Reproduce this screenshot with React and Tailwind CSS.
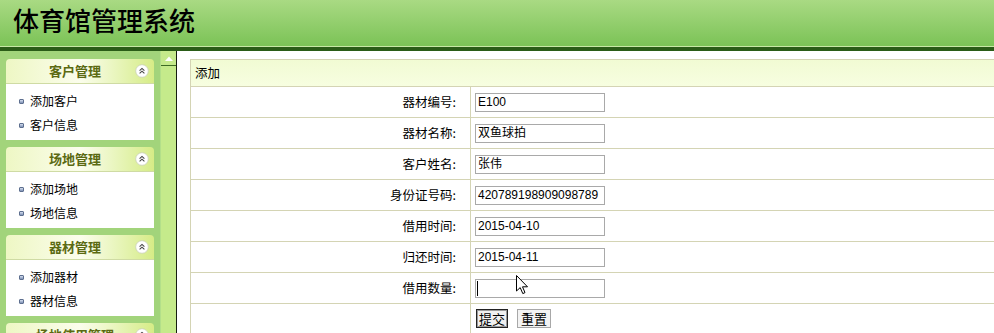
import React from "react";

const cjk = { fontFamily: '"Noto Sans CJK SC", "Noto Sans", sans-serif' };
const latin = { fontFamily: '"Liberation Sans", "Noto Sans CJK SC", sans-serif' };

function CollapseIcon() {
  return (
    <svg width="14" height="14" viewBox="0 0 14 14" className="absolute right-[5px] top-[5px]">
      <circle cx="7" cy="7" r="6.3" fill="#ffffff" stroke="#c9cfb8" strokeWidth="0.8" />
      <path d="M4.6 6.6 L7 4.4 L9.4 6.6" fill="none" stroke="#444" strokeWidth="1.1" />
      <path d="M4.6 9.4 L7 7.2 L9.4 9.4" fill="none" stroke="#444" strokeWidth="1.1" />
    </svg>
  );
}

function Bullet() {
  return (
    <span className="inline-block w-[5px] h-[5px] rounded-[1px] border border-[#5d6f8f] bg-gradient-to-b from-[#d5deee] to-[#7d90b4]" />
  );
}

function Panel({ title, items }) {
  return (
    <div className="w-[148px] rounded-t-[4px] overflow-hidden shrink-0">
      <div
        className="relative h-[25px] border-b border-[#cfdba4] bg-gradient-to-r from-[#eef7c4] via-[#fbfdec] to-[#d6ec86] flex items-center justify-center pr-[10px] text-[13px] font-bold text-[#5b6a12]"
        style={cjk}
      >
        {title}
        <CollapseIcon />
      </div>
      <div className="bg-white pt-[5px] pb-[3px] min-h-[56px]">
        {items.map((it) => (
          <div key={it} className="h-[24px] flex items-center pl-[13px] gap-[6px] text-[12px] text-black" style={cjk}>
            <Bullet />
            <span>{it}</span>
          </div>
        ))}
      </div>
    </div>
  );
}

function Field({ label, value, caret }) {
  return (
    <div className="h-[31px] flex border-b border-[#d4d4b4]">
      <div
        className="w-[280px] shrink-0 border-r border-[#d4d4b4] flex items-center justify-end pr-[14px] text-[12.5px] text-black"
        style={cjk}
      >
        {label}:
      </div>
      <div className="flex items-center pl-[4px]">
        <div
          className="relative w-[130px] h-[19px] border border-[#a9a9a9] bg-white flex items-center pl-[2px] text-[12px] text-black"
          style={latin}
        >
          {value}
          {caret && <span className="absolute left-[1px] top-[1px] w-px h-[15px] bg-black" />}
        </div>
      </div>
    </div>
  );
}

export default function App() {
  return (
    <div className="relative w-[994px] h-[333px] overflow-hidden bg-white">
      {/* header */}
      <div className="h-[46px] bg-gradient-to-b from-[#a9da83] to-[#7bc356] pl-[13px] pt-[5px]">
        <div className="text-[26px] leading-[30px] font-medium text-black" style={cjk}>
          体育馆管理系统
        </div>
      </div>
      <div className="h-px bg-[#c6e8a4]" />
      <div className="h-[4px] bg-[#2a5c17]" />

      <div className="flex h-[282px]">
        {/* sidebar */}
        <div className="w-[160px] shrink-0 bg-[#a2d47b] pt-[8px] pl-[6px] flex flex-col gap-[7px]">
          <Panel title="客户管理" items={["添加客户", "客户信息"]} />
          <Panel title="场地管理" items={["添加场地", "场地信息"]} />
          <Panel title="器材管理" items={["添加器材", "器材信息"]} />
          <Panel title="场地使用管理" items={[]} />
        </div>

        {/* splitter */}
        <div className="w-[17px] shrink-0 border-l border-[#b3df8a] border-r border-r-[#161d10] bg-[#c5ea8b] flex flex-col">
          <div className="h-[15px] border-b border-[#3e6b25] flex items-center justify-center">
            <svg width="8" height="5" viewBox="0 0 8 5">
              <path d="M0 5 L4 0.5 L8 5 Z" fill="#ffffff" />
            </svg>
          </div>
        </div>

        {/* content */}
        <div className="flex-1 bg-white pl-[13px] pt-[8px]">
          <div className="w-[820px] border-l border-t border-[#d4d4b4]">
            <div
              className="h-[27px] border-b border-[#d4d4b4] bg-gradient-to-b from-[#f1fbd3] to-[#f7fee0] flex items-center pl-[4px] text-[12.5px] text-black"
              style={cjk}
            >
              添加
            </div>
            <Field label="器材编号" value="E100" />
            <Field label="器材名称" value="双鱼球拍" />
            <Field label="客户姓名" value="张伟" />
            <Field label="身份证号码" value="420789198909098789" />
            <Field label="借用时间" value="2015-04-10" />
            <Field label="归还时间" value="2015-04-11" />
            <Field label="借用数量" value="" caret />
            <div className="h-[40px] flex">
              <div className="w-[280px] shrink-0 border-r border-[#d4d4b4]" />
              <div className="flex items-start pt-[5px] pl-[5px] gap-[9px]">
                <button
                  className="h-[19px] px-[2px] border border-[#222] outline outline-1 outline-[#9a9a9a] -outline-offset-2 bg-[#f0f0f0] text-[13px] leading-[17px] text-black"
                  style={cjk}
                >
                  提交
                </button>
                <button
                  className="h-[19px] px-[3px] border border-[#a8a8a8] bg-[#f3f3f3] text-[13px] leading-[17px] text-black"
                  style={cjk}
                >
                  重置
                </button>
              </div>
            </div>
          </div>
        </div>
      </div>

      {/* mouse cursor */}
      <svg className="absolute left-[516px] top-[275px]" width="13" height="20" viewBox="0 0 13 20">
        <path d="M0.5 0.5 L0.5 16 L4.2 12.6 L6.8 18.6 L9 17.6 L6.5 11.8 L11.5 11.8 Z" fill="#ffffff" stroke="#000" strokeWidth="1" strokeLinejoin="miter" />
      </svg>
    </div>
  );
}
